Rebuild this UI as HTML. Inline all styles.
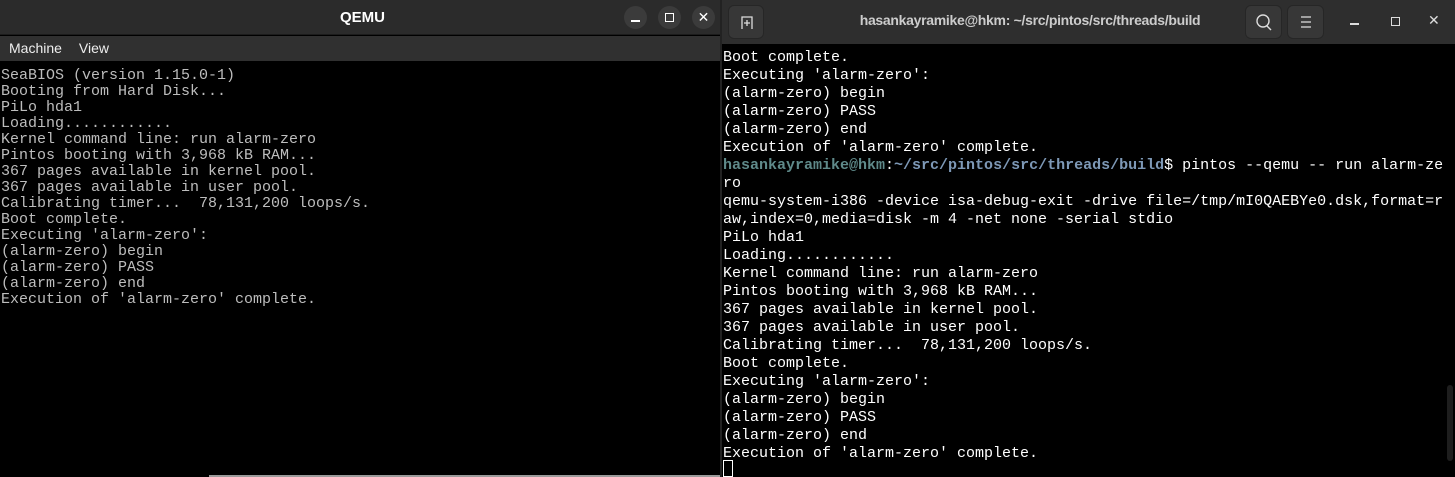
<!DOCTYPE html>
<html><head><meta charset="utf-8"><style>
*{margin:0;padding:0;box-sizing:border-box}
body{width:1455px;height:477px;background:#000;position:relative;overflow:hidden;font-family:"Liberation Mono",monospace}
.q{position:absolute;left:0;top:0;width:720px;height:477px;background:#000}
.qt{position:absolute;left:0;top:0;width:720px;height:35px;background:#2b2b2b;border-bottom:1px solid #1c1c1c;color:#fff;font:bold 15px "Liberation Sans",sans-serif;text-align:center;line-height:35px}
.qt span{position:absolute;left:340px}
.cb{position:absolute;top:6px;width:23px;height:23px;border-radius:50%;background:#3b3b3b}
.qm{position:absolute;left:0;top:36px;width:720px;height:25px;background:#303030;color:#eee;font:14px "Liberation Sans",sans-serif;line-height:25px}
.qc{position:absolute;left:1px;top:68px;font-size:15px;line-height:16px;color:#bdbdbd;white-space:pre}
.t{position:absolute;left:722px;top:0;width:733px;height:477px;background:#000}
.th{position:absolute;left:0;top:0;width:733px;height:44px;background:#2e2e2e}
.btn{position:absolute;top:5px;height:34px;border-radius:6px;background:#373737;border:1px solid #262626}
.tc{position:absolute;left:1px;top:49px;font-size:15px;line-height:18px;color:#fff;white-space:pre}
.u{color:#5f8a8a;font-weight:bold}.p{color:#7d98b6;font-weight:bold}
</style></head><body>
<div class="q">
 <div class="qt"><span>QEMU</span>
  <div class="cb" style="left:624px"><div style="position:absolute;left:7px;top:14px;width:9px;height:2px;background:#fff"></div></div>
  <div class="cb" style="left:658px"><div style="position:absolute;left:7px;top:7px;width:9px;height:9px;border:1.5px solid #fff"></div></div>
  <div class="cb" style="left:692px;color:#fff;font:14px 'Liberation Sans';line-height:23px;text-align:center">✕</div>
 </div>
 <div class="qm"><span style="margin-left:9px">Machine</span><span style="margin-left:17px">View</span></div>
 <div class="qc">SeaBIOS (version 1.15.0-1)
Booting from Hard Disk...
PiLo hda1
Loading............
Kernel command line: run alarm-zero
Pintos booting with 3,968 kB RAM...
367 pages available in kernel pool.
367 pages available in user pool.
Calibrating timer...  78,131,200 loops/s.
Boot complete.
Executing 'alarm-zero':
(alarm-zero) begin
(alarm-zero) PASS
(alarm-zero) end
Execution of 'alarm-zero' complete.</div>
 <div style="position:absolute;left:209px;top:475px;width:511px;height:2px;background:#9a9a9a"></div>
</div>
<div style="position:absolute;left:720px;top:0;width:2px;height:477px;background:#222"></div>
<div class="t">
 <div class="th">
  <div class="btn" style="left:6px;width:36px"><svg width="36" height="34" viewBox="0 0 36 34"><path d="M13 23V11h10v12M15 17h6M18 14v6" stroke="#ddd" stroke-width="1.3" fill="none"/></svg></div>
  <div style="position:absolute;left:0;width:616px;text-align:center;top:12px;color:#ccc;font:bold 14px 'Liberation Sans',sans-serif;letter-spacing:-0.3px">hasankayramike@hkm: ~/src/pintos/src/threads/build</div>
  <div class="btn" style="left:523px;width:37px"><svg width="37" height="34"><circle cx="17" cy="15" r="6" stroke="#ddd" stroke-width="1.4" fill="none"/><path d="M21 20l4 4" stroke="#ddd" stroke-width="1.4"/></svg></div>
  <div class="btn" style="left:565px;width:37px"><svg width="37" height="34"><path d="M13 11h10M13 16h10M13 21h10" stroke="#ddd" stroke-width="1.3"/></svg></div>
  <div style="position:absolute;left:628px;top:23px;width:9px;height:1.5px;background:#ddd"></div>
  <div style="position:absolute;left:669px;top:17px;width:9px;height:9px;border:1.3px solid #ddd"></div>
  <div style="position:absolute;left:706px;top:12px;color:#ddd;font:14px 'Liberation Sans'">✕</div>
 </div>
 <div class="tc">Boot complete.
Executing 'alarm-zero':
(alarm-zero) begin
(alarm-zero) PASS
(alarm-zero) end
Execution of 'alarm-zero' complete.
<span class="u">hasankayramike@hkm</span>:<span class="p">~/src/pintos/src/threads/build</span>$ pintos --qemu -- run alarm-ze
ro
qemu-system-i386 -device isa-debug-exit -drive file=/tmp/mI0QAEBYe0.dsk,format=r
aw,index=0,media=disk -m 4 -net none -serial stdio
PiLo hda1
Loading............
Kernel command line: run alarm-zero
Pintos booting with 3,968 kB RAM...
367 pages available in kernel pool.
367 pages available in user pool.
Calibrating timer...  78,131,200 loops/s.
Boot complete.
Executing 'alarm-zero':
(alarm-zero) begin
(alarm-zero) PASS
(alarm-zero) end
Execution of 'alarm-zero' complete.</div>
 <div style="position:absolute;left:1px;top:460px;width:10px;height:17px;border:1px solid #fff"></div>
 <div style="position:absolute;left:725px;top:385px;width:6px;height:76px;border-radius:3px;background:#1e1e1e"></div>
</div>
</body></html>
